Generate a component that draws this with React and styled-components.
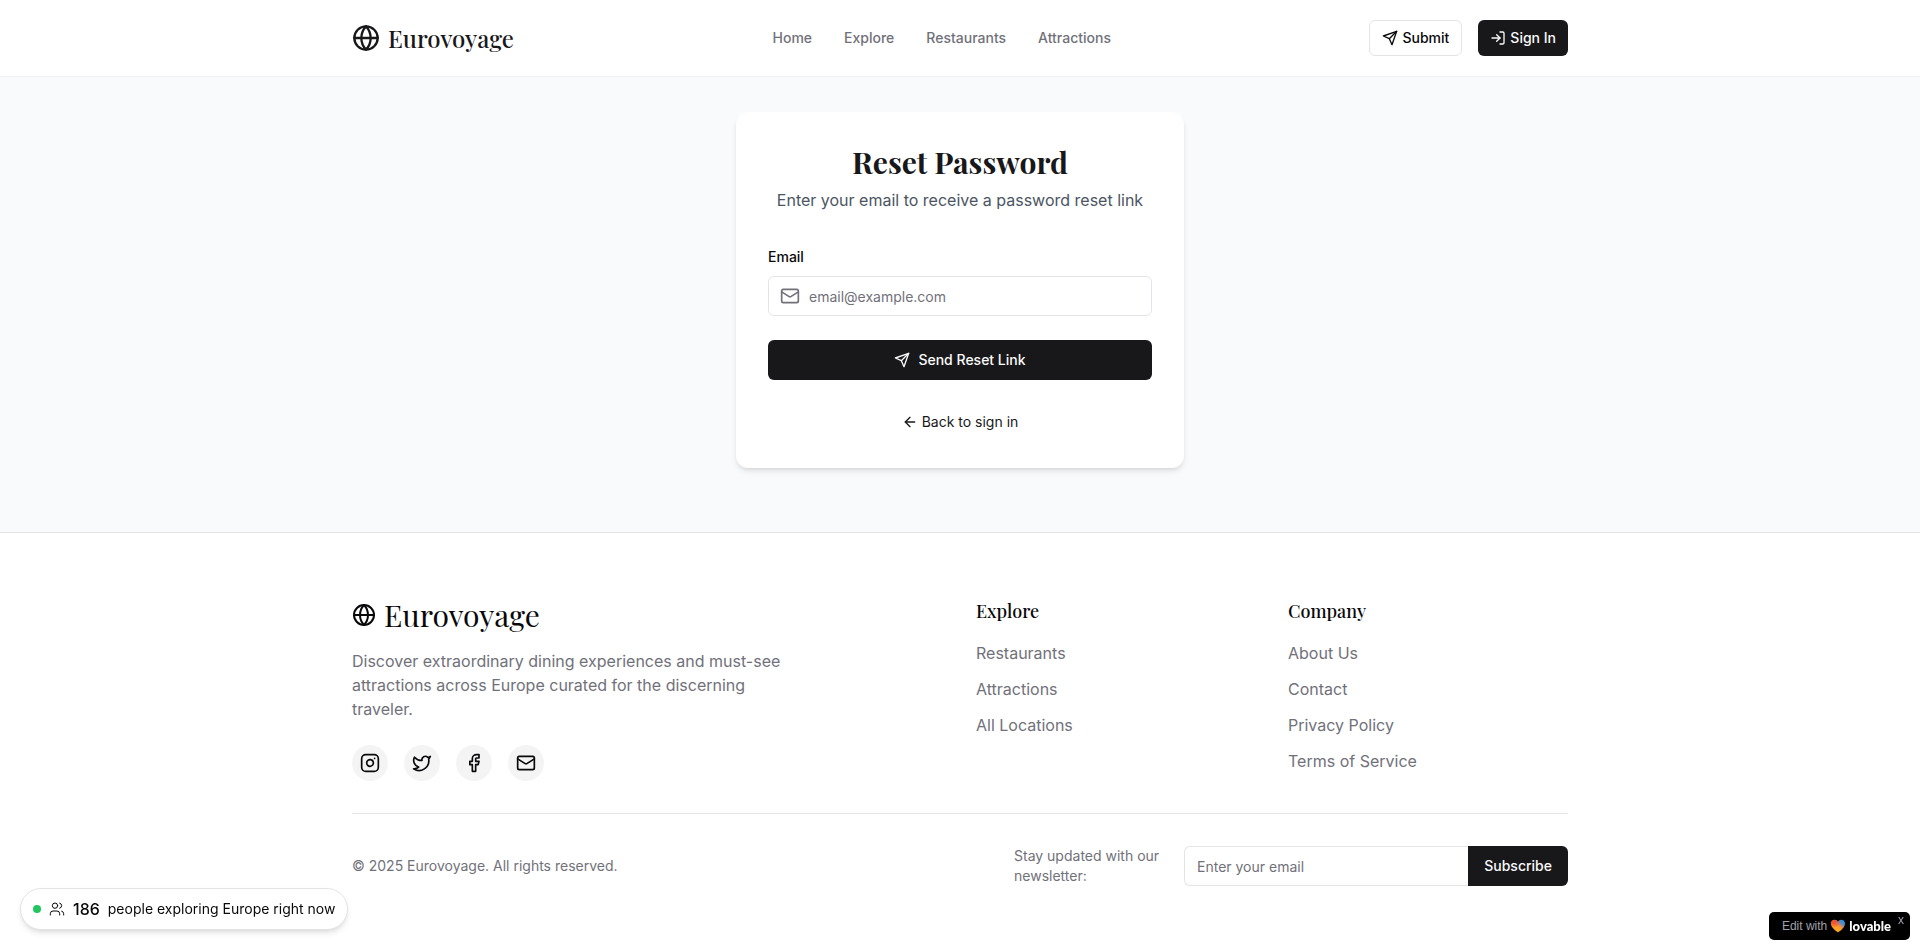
import React from "react";
import styled, { createGlobalStyle, css } from "styled-components";
import { Globe, LogIn, Mail, ArrowLeft, Instagram, Twitter, Facebook, Users } from "lucide-react";

const ink = "#18181b";
const muted = "#71717a";
const line = "#e4e4e7";
const serif = '"Playfair Display", "Liberation Serif", serif';

const GlobalStyle = createGlobalStyle`
  *, *::before, *::after { box-sizing: border-box; }
  body {
    margin: 0;
    background: #fff;
    color: #09090b;
    font-family: Inter, "Liberation Sans", sans-serif;
    font-size: 16px;
    line-height: 24px;
  }
  h1, h2, h3, p, ul { margin: 0; padding: 0; }
  ul { list-style: none; }
  a { color: inherit; text-decoration: none; }
  button, input { font: inherit; }
  svg { display: block; flex-shrink: 0; }
`;

const Page = styled.div`
  min-height: 100vh;
  display: flex;
  flex-direction: column;
`;

const Container = styled.div`
  width: 100%;
  max-width: 1280px;
  margin: 0 auto;
  padding: 0 32px;
`;

const Header = styled.header`
  border-bottom: 1px solid #f0f1f3;
`;

const HeaderRow = styled(Container)`
  display: flex;
  align-items: center;
  justify-content: space-between;
  padding-top: 20px;
  padding-bottom: 20px;
`;

const Brand = styled.a`
  display: flex;
  align-items: center;
  gap: 8px;
  height: 36px;
  color: ${(p) => (p.$large ? "#09090b" : ink)};
  font-family: ${serif};
  font-size: ${(p) => (p.$large ? 30 : 24)}px;
  font-weight: ${(p) => (p.$large ? 400 : 500)};
  line-height: 36px;
`;

const Nav = styled.nav`
  display: flex;
  gap: 32px;
  color: ${muted};
  font-size: 14px;
  font-weight: 500;
  line-height: 20px;
`;

const Actions = styled.div`
  display: flex;
  gap: 16px;
`;

const Button = styled.button`
  display: inline-flex;
  align-items: center;
  justify-content: center;
  gap: ${(p) => (p.$wide ? 8 : 4)}px;
  width: ${(p) => (p.$wide ? "100%" : "auto")};
  height: ${(p) => (p.$small ? 36 : 40)}px;
  padding: 0 ${(p) => (p.$small ? 12 : 16)}px;
  border: 0;
  border-radius: 6px;
  background: ${ink};
  color: #fafafa;
  font-size: 14px;
  font-weight: 500;
  line-height: 20px;
  cursor: pointer;
  ${(p) =>
    p.$outline &&
    css`
      border: 1px solid ${line};
      background: #fff;
      color: #09090b;
    `}
`;

const Main = styled.main`
  flex: 1;
  padding: 35px 16px 64px;
  background: #f9fafb;
`;

const Card = styled.section`
  width: 100%;
  max-width: 448px;
  margin: 0 auto;
  padding: 32px;
  border-radius: 12px;
  background: #fff;
  box-shadow: 0 4px 6px -1px rgba(0, 0, 0, 0.1), 0 2px 4px -2px rgba(0, 0, 0, 0.1);
`;

const CardHead = styled.div`
  display: grid;
  gap: 8px;
  margin-bottom: 32px;
  text-align: center;
`;

const Title = styled.h1`
  color: ${ink};
  font-family: ${serif};
  font-size: 30px;
  font-weight: 700;
  line-height: 36px;
`;

const Subtitle = styled.p`
  color: #4b5563;
`;

const Form = styled.form`
  display: grid;
  gap: 24px;
`;

const Field = styled.div`
  display: grid;
  gap: 6px;
`;

const Label = styled.label`
  font-size: 14px;
  font-weight: 500;
  line-height: 26px;
`;

const InputShell = styled.div`
  display: flex;
  align-items: center;
  gap: 9px;
  height: 40px;
  padding: 0 12px 0 ${(p) => (p.$icon ? 11 : 12)}px;
  border: 1px solid ${line};
  border-radius: 6px;
  color: ${muted};
`;

const TextInput = styled.input`
  flex: 1;
  min-width: 0;
  height: 38px;
  padding: 0;
  border: 0;
  outline: 0;
  background: transparent;
  color: #09090b;
  font-size: 14px;
  line-height: 20px;
  &::placeholder { color: ${muted}; opacity: 1; }
`;

const BackRow = styled.div`
  display: flex;
  justify-content: center;
  align-items: flex-start;
  height: 24px;
  margin-top: 32px;
`;

const BackLink = styled.a`
  display: inline-flex;
  align-items: center;
  gap: 4px;
  color: ${ink};
  font-size: 14px;
  line-height: 20px;
`;

const Footer = styled.footer`
  padding: 64px 0;
  border-top: 1px solid ${line};
`;

const FooterGrid = styled.div`
  display: grid;
  grid-template-columns: repeat(4, 1fr);
  gap: 32px;
`;

const About = styled.div`
  grid-column: span 2;
`;

const Blurb = styled.p`
  max-width: 448px;
  margin: 16px 0 24px;
  color: ${muted};
`;

const Socials = styled.div`
  display: flex;
  gap: 16px;
`;

const Social = styled.a`
  display: grid;
  place-items: center;
  width: 36px;
  height: 36px;
  border-radius: 50%;
  background: #f4f4f5;
`;

const ColumnTitle = styled.h3`
  margin-bottom: 16px;
  font-family: ${serif};
  font-size: 18px;
  font-weight: 500;
  line-height: 28px;
`;

const LinkList = styled.ul`
  display: grid;
  gap: 12px;
  color: ${muted};
`;

const FooterBottom = styled.div`
  display: flex;
  align-items: center;
  justify-content: space-between;
  margin-top: 32px;
  padding-top: 32px;
  border-top: 1px solid ${line};
  color: ${muted};
  font-size: 14px;
  line-height: 20px;
`;

const Newsletter = styled.form`
  display: flex;
  align-items: center;
  gap: 16px;
`;

const NewsletterLabel = styled.label`
  width: 154px;
`;

const Joined = styled.div`
  display: flex;
  width: 384px;
  ${InputShell} { flex: 1; border-right: 0; border-radius: 6px 0 0 6px; }
  ${Button} { border-radius: 0 6px 6px 0; }
`;

const LivePill = styled.div`
  position: fixed;
  left: 20px;
  bottom: 20px;
  display: flex;
  align-items: center;
  gap: 8px;
  padding: 8px 12px;
  border: 1px solid ${line};
  border-radius: 21px;
  background: #fff;
  box-shadow: 0 4px 6px -1px rgba(0, 0, 0, 0.1), 0 2px 4px -2px rgba(0, 0, 0, 0.1);
  font-size: 14px;
`;

const Dot = styled.span`
  width: 8px;
  height: 8px;
  border-radius: 50%;
  background: #22c55e;
`;

const Count = styled.span`
  font-size: 16px;
  font-weight: 500;
`;

const Badge = styled.aside`
  position: fixed;
  right: 10px;
  bottom: 10px;
  display: flex;
  align-items: center;
  height: 28px;
  padding: 0 6px 0 13px;
  border-radius: 5px;
  background: #000;
  color: #a1a1aa;
  font-family: "Liberation Sans", sans-serif;
  font-size: 12px;
  line-height: 16px;
`;

const BadgeLink = styled.a`
  display: flex;
  align-items: center;
  gap: 4px;
`;

const Wordmark = styled.span`
  color: #fff;
  font-family: Lato, sans-serif;
  font-size: 13px;
  font-weight: 900;
`;

const Close = styled.button`
  align-self: flex-start;
  margin-left: 7px;
  padding: 0;
  border: 0;
  background: none;
  color: #a1a1aa;
  font-size: 12px;
  line-height: 16px;
`;

function PaperPlane() {
  return (
    <svg width="16" height="16" viewBox="0 0 24 24" fill="none" stroke="currentColor" strokeWidth="2" strokeLinecap="round" strokeLinejoin="round" aria-hidden="true">
      <path d="m22 2-7 20-4-9-9-4Z" />
      <path d="M22 2 11 13" />
    </svg>
  );
}

function Heart() {
  return (
    <svg width="14" height="14" viewBox="0 0 14 14" aria-hidden="true">
      <defs>
        <linearGradient id="heart-base" x1="0.3" y1="0.9" x2="0.85" y2="0.1">
          <stop offset="0.35" stopColor="#ffa21f" />
          <stop offset="0.6" stopColor="#d8876a" />
          <stop offset="0.78" stopColor="#5590c0" />
          <stop offset="1" stopColor="#2f8fe0" />
        </linearGradient>
        <radialGradient id="heart-glow" cx="0.2" cy="0.15" r="0.5">
          <stop offset="0.2" stopColor="#f2502f" />
          <stop offset="1" stopColor="#f2502f" stopOpacity="0" />
        </radialGradient>
        <path id="heart-shape" d="M7 13.500C4 11.400 0 8.300 0 4.600 0 2.200 1.700.8 3.600.8 5.200.8 6.400 1.700 7 2.800 7.600 1.700 8.800.8 10.400.8 12.300.8 14 2.200 14 4.600 14 8.300 10 11.400 7 13.500Z" />
      </defs>
      <use href="#heart-shape" fill="url(#heart-base)" />
      <use href="#heart-shape" fill="url(#heart-glow)" />
    </svg>
  );
}

const columns = [
  ["Explore", ["Restaurants", "Attractions", "All Locations"]],
  ["Company", ["About Us", "Contact", "Privacy Policy", "Terms of Service"]],
];

const socials = [
  ["Instagram", Instagram],
  ["Twitter", Twitter],
  ["Facebook", Facebook],
  ["Email", Mail],
];

export default function App() {
  return (
    <Page>
      <GlobalStyle />
      <Header>
        <HeaderRow>
          <Brand href="#"><Globe size={28} />Eurovoyage</Brand>
          <Nav>
            {["Home", "Explore", "Restaurants", "Attractions"].map((t) => <a href="#" key={t}>{t}</a>)}
          </Nav>
          <Actions>
            <Button type="button" $small $outline><PaperPlane />Submit</Button>
            <Button type="button" $small><LogIn size={16} />Sign In</Button>
          </Actions>
        </HeaderRow>
      </Header>

      <Main>
        <Card>
          <CardHead>
            <Title>Reset Password</Title>
            <Subtitle>Enter your email to receive a password reset link</Subtitle>
          </CardHead>
          <Form onSubmit={(e) => e.preventDefault()}>
            <Field>
              <Label htmlFor="email">Email</Label>
              <InputShell $icon>
                <Mail size={20} />
                <TextInput id="email" type="email" placeholder="email@example.com" />
              </InputShell>
            </Field>
            <Button type="submit" $wide><PaperPlane />Send Reset Link</Button>
          </Form>
          <BackRow>
            <BackLink href="#"><ArrowLeft size={16} />Back to sign in</BackLink>
          </BackRow>
        </Card>
      </Main>

      <Footer>
        <Container>
          <FooterGrid>
            <About>
              <Brand href="#" $large><Globe size={24} />Eurovoyage</Brand>
              <Blurb>
                Discover extraordinary dining experiences and must-see attractions across Europe curated for the discerning traveler.
              </Blurb>
              <Socials>
                {socials.map(([name, Icon]) => (
                  <Social href="#" key={name} aria-label={name}><Icon size={20} /></Social>
                ))}
              </Socials>
            </About>
            {columns.map(([title, links]) => (
              <div key={title}>
                <ColumnTitle>{title}</ColumnTitle>
                <LinkList>
                  {links.map((l) => <li key={l}><a href="#">{l}</a></li>)}
                </LinkList>
              </div>
            ))}
          </FooterGrid>
          <FooterBottom>
            <p>© 2025 Eurovoyage. All rights reserved.</p>
            <Newsletter onSubmit={(e) => e.preventDefault()}>
              <NewsletterLabel htmlFor="newsletter">Stay updated with our newsletter:</NewsletterLabel>
              <Joined>
                <InputShell>
                  <TextInput id="newsletter" type="email" placeholder="Enter your email" />
                </InputShell>
                <Button type="submit">Subscribe</Button>
              </Joined>
            </Newsletter>
          </FooterBottom>
        </Container>
      </Footer>

      <LivePill>
        <Dot />
        <Users size={16} strokeWidth={1.5} />
        <Count>186</Count>
        <span>people exploring Europe right now</span>
      </LivePill>

      <Badge>
        <BadgeLink href="#">Edit with <Heart /><Wordmark>lovable</Wordmark></BadgeLink>
        <Close type="button" aria-label="Close">x</Close>
      </Badge>
    </Page>
  );
}
